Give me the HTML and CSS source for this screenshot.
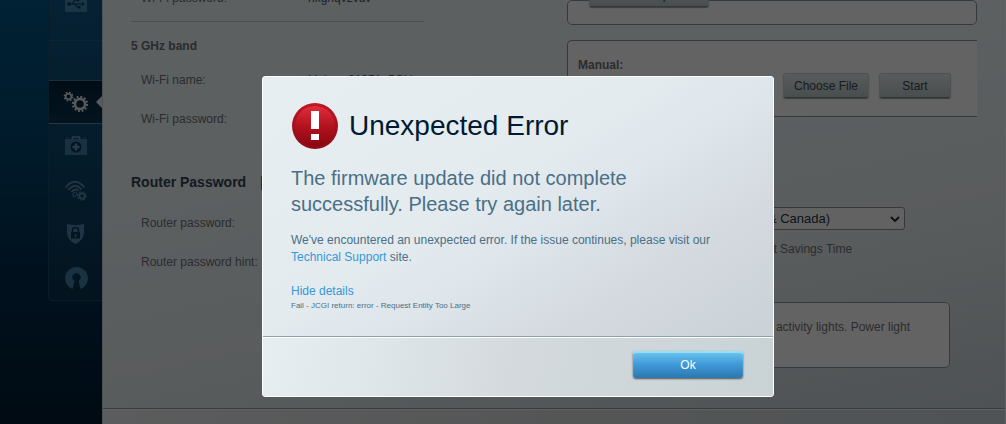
FILE: index.html
```html
<!DOCTYPE html>
<html lang="en">
<head>
    <meta charset="UTF-8">
    <meta name="viewport" content="width=device-width, initial-scale=1.0">
    <title>Router settings</title>
    <link rel="stylesheet" href="styles.css">
</head>
<body>
    <div class="page">
        <nav class="menu">
            <a href="##" class="menu-item usb" aria-label="USB storage">
                <svg width="22" height="18" viewBox="0 0 22 18">
                    <rect width="22" height="18" fill="#4185ad"/>
                    <g fill="none" stroke="#0a3453" stroke-width="1.2">
                        <path d="M3 10H18M7 10L10 6H13M10 10L12 13H14"/>
                        <path d="M17 8L20 10L17 12Z" fill="#0a3453" stroke="none"/>
                    </g>
                    <circle cx="4" cy="10" r="1.8" fill="#0a3453"/>
                    <circle cx="13" cy="6" r="1.4" fill="#0a3453"/>
                    <rect x="13" y="12" width="2.500" height="2.500" fill="#0a3453"/>
                </svg>
            </a>
            <div class="menu-item blank"></div>
            <a href="##" class="menu-item active" aria-label="Connectivity">
                <svg width="26" height="24" viewBox="0 0 26 24" fill="none" stroke="#dde2e5">
                    <circle cx="5.500" cy="6.500" r="2.8" stroke-width="1.6"/>
                    <circle cx="5.500" cy="6.500" r="4" stroke-width="1.8" stroke-dasharray="1.7 1.44"/>
                    <circle cx="17" cy="14" r="5" stroke-width="2.4"/>
                    <circle cx="17" cy="14" r="7" stroke-width="2.2" stroke-dasharray="2 1.665"/>
                </svg>
            </a>
            <a href="##" class="menu-item" aria-label="Troubleshooting">
                <svg width="24" height="22" viewBox="0 0 24 22">
                    <path d="M8.500 4V2H15.500V4" fill="none" stroke="#6597b8" stroke-width="1.5"/>
                    <path d="M2 2.500H5M19 2.500H22" stroke="#2f668b"/>
                    <rect x="1" y="4" width="22" height="16" fill="#3f7ba6"/>
                    <circle cx="12" cy="12" r="5.500" fill="#0a3453"/>
                    <path d="M12 8.500V15.500M8.500 12H15.500" stroke="#5b97bd" stroke-width="2.4"/>
                </svg>
            </a>
            <a href="##" class="menu-item" aria-label="Wireless">
                <svg width="24" height="22" viewBox="0 0 24 22" fill="none" stroke="#5a86a6">
                    <path d="M1.500 8.500Q11 -3 20.500 8.500M4.500 11Q11 3 17.500 10.500M7.500 13Q11 9 14.500 11.500" stroke-width="1.8"/>
                    <circle cx="11" cy="15.500" r="2" stroke-width="1.5" stroke-dasharray="1.3 .6"/>
                    <circle cx="18" cy="17" r="2.600" stroke-width="1.8"/>
                    <circle cx="18" cy="17" r="4" stroke-width="1.5" stroke-dasharray="1.6 1.54"/>
                </svg>
            </a>
            <a href="##" class="menu-item" aria-label="Security">
                <svg width="24" height="22" viewBox="0 0 24 22">
                    <path d="M3 1Q12 3 20 1V9Q20 17 11.500 21Q3 17 3 9Z" fill="#4b81a7"/>
                    <path d="M8.500 10V7.500A3 3 0 0 1 14.500 7.500V10" fill="none" stroke="#0a3453" stroke-width="1.6"/>
                    <rect x="7" y="9" width="9" height="6.500" fill="#0a3453"/>
                    <path d="M11.500 11V14" stroke="#4b81a7" stroke-width="1.5"/>
                </svg>
            </a>
            <a href="##" class="menu-item" aria-label="OpenVPN">
                <svg width="24" height="24" viewBox="0 0 24 24">
                    <path d="M8.500 23L10.500 15A4.200 4.200 0 1 1 14.500 15L16.500 23A11.400 11.400 0 1 0 8.500 23Z" fill="#437ca5"/>
                </svg>
            </a>
        </nav>
        <div class="main">
            <div class="columns">
                <div class="column">
                    <dl class="rows first">
                        <div class="row"><dt>Wi-Fi password:</dt><dd>hxghqvzvdv</dd></div>
                    </dl>
                    <h3 class="band">5 GHz band</h3>
                    <dl class="rows">
                        <div class="row"><dt>Wi-Fi name:</dt><dd>Linksys01051_5GHz</dd></div>
                        <div class="row"><dt>Wi-Fi password:</dt><dd></dd></div>
                    </dl>
                    <h2 class="section-title">Router Password <span class="separator">|</span></h2>
                    <dl class="rows">
                        <div class="row"><dt>Router password:</dt><dd></dd></div>
                        <div class="row"><dt>Router password hint:</dt><dd></dd></div>
                    </dl>
                </div>
                <div class="column">
                    <div class="box update">
                        <button class="button wide">Check for Updates</button>
                    </div>
                    <div class="box manual">
                        <strong class="manual-label">Manual:</strong>
                        <div class="buttons">
                            <button class="button choose">Choose File</button>
                            <button class="button start">Start</button>
                        </div>
                    </div>
                    <div class="timezone">
                        <div class="select-wrap">
                            <select class="select" aria-label="Time zone">
                                <option>(GMT-08:00) Pacific Time (USA &amp; Canada)</option>
                            </select>
                            <svg class="chevron" width="10" height="6" viewBox="0 0 10 6"><path d="M1 1L5 5L9 1" fill="none" stroke="#26323c" stroke-width="2"/></svg>
                        </div>
                        <label class="check"><input type="checkbox" checked>Automatically adjust for Daylight Savings Time</label>
                    </div>
                    <div class="box lights">
                        <label class="lights-text"><input type="checkbox" checked> Enable the router's port activity lights. Power light</label>
                    </div>
                </div>
            </div>
            <div class="page-footer"></div>
        </div>
    </div>

    <div class="overlay">
        <div class="dialog" role="alertdialog" aria-labelledby="dialog-title">
            <div class="dialog-body">
                <div class="dialog-header">
                    <svg width="46" height="46" viewBox="0 0 46 46">
                        <defs>
                            <linearGradient id="red" x1="0" y1="0" x2="0" y2="1">
                                <stop offset="0" stop-color="#e22c3a"/>
                                <stop offset=".5" stop-color="#b3131f"/>
                                <stop offset="1" stop-color="#8b0610"/>
                            </linearGradient>
                            <linearGradient id="rim" x1="0" y1="0" x2="0" y2="1">
                                <stop offset="0" stop-color="#bd1825"/>
                                <stop offset="1" stop-color="#8c0a16"/>
                            </linearGradient>
                        </defs>
                        <circle cx="23" cy="23" r="23" fill="url(#rim)"/>
                        <circle cx="23" cy="23" r="20" fill="url(#red)"/>
                        <path d="M19 8H27V26H19ZM19 31H27V37H19Z" fill="#fff"/>
                    </svg>
                    <h1 class="dialog-title" id="dialog-title">Unexpected Error</h1>
                </div>
                <p class="lead">The firmware update did not complete successfully. Please try again later.</p>
                <p class="text">We've encountered an unexpected error. If the issue continues, please visit our <a href="##">Technical Support</a> site.</p>
                <a href="##" class="details-link">Hide details</a>
                <p class="details">Fail - JCGI return: error - Request Entity Too Large</p>
            </div>
            <div class="dialog-footer">
                <button class="ok">Ok</button>
            </div>
        </div>
    </div>
</body>
</html>
```
FILE: styles.css
```css
*{
    padding: 0;
    margin: 0;
    box-sizing: border-box;
}

body{
    font-family: "Liberation Sans", Arial, sans-serif;
    font-size: 12px;
    line-height: 17px;
    color: #6e6e72;
    background: linear-gradient(#005583, #00466f 30%, #002b4b 65%, #001c30);
    height: 100vh;
    overflow: hidden;
}

a{
    text-decoration: none;
    color: #3797d8;
}

.page{
    display: flex;
    height: 100vh;
    padding-left: 48px;
}

/* ==================menu===================== */
.menu{
    width: 54px;
    flex: none;
    align-self: flex-start;
    background: linear-gradient(#0f5480, #0c4a70 40%, #08324e);
    border: 1px solid #17486a;
    border-width: 0 0 1px 1px;
    border-radius: 0 0 0 4px;
}

.menu-item{
    display: flex;
    align-items: center;
    justify-content: center;
    height: 44px;
    position: relative;
}

.menu-item.usb{
    height: 41px;
    align-items: flex-start;
    overflow: hidden;
    border-bottom: 1px solid #215a7d;
}

.menu-item.usb svg{
    margin-top: -6px;
}

.menu-item.blank{
    height: 39px;
}

.menu-item.active{
    background: linear-gradient(#002138, #093551);
    border-top: 1px solid #4f7489;
    border-bottom: 1px solid #6a8798;
}

.menu-item.active::after{
    content: '';
    position: absolute;
    right: 0;
    top: 15px;
    border: 6px solid transparent;
    border-left-width: 0;
    border-right-color: #e0e6e9;
}

/* ==================content===================== */
.main{
    flex: 1;
    display: flex;
    flex-direction: column;
    background: linear-gradient(168deg, #e6eff3 35%, #dfe6e8 65%, #bfcbd1);
    border-left: 1px solid #c0cdd3;
    border-right: 1px solid #f0f6fa;
}

.columns{
    display: grid;
    grid-template-columns: 1fr 410px;
    padding: 0 28px;
}

.rows{
    display: grid;
    gap: 22px;
    padding-left: 10px;
}

.row{
    display: grid;
    grid-template-columns: 167px 1fr;
}

.row dd{
    color: #55585b;
}

.rows.first{
    margin-top: -10px;
    margin-right: 143px;
    padding-bottom: 14px;
    border-bottom: 1px solid #b9c4ca;
}

.band{
    font-size: 12px;
    margin: 16px 0 17px;
}

.section-title{
    font-size: 14px;
    color: #35424f;
    margin: 46px 0 24px;
}

.separator{
    font-weight: normal;
    margin-left: 10px;
}

.box{
    background: #faf8fa;
    border: 1px solid #7b96a5;
    border-radius: 5px;
}

.update{
    display: flex;
    align-items: flex-start;
    height: 25px;
    padding-left: 21px;
}

.button{
    height: 25px;
    font-family: inherit;
    font-size: 12px;
    color: #3a4650;
    background: linear-gradient(#dce5e5, #b5c2c4);
    border: 1px solid #c3cbcd;
    border-bottom-color: #82898b;
    border-radius: 3px;
    box-shadow: 0 1px 1px #999;
}

.wide{
    width: 120px;
    margin-top: -19px;
}

.manual{
    height: 77px;
    margin-top: 15px;
    padding: 16px 26px 0 10px;
    border-right: 0;
    border-radius: 5px 0 0 5px;
    display: flex;
    justify-content: space-between;
}

.buttons{
    display: flex;
    gap: 10px;
    padding-top: 16px;
}

.choose{
    width: 86px;
}

.start{
    width: 72px;
}

.timezone{
    margin: 90px 0 44px 11px;
}

.select-wrap{
    position: relative;
    width: 327px;
}

.select{
    display: block;
    width: 100%;
    height: 23px;
    padding-left: 4px;
    appearance: none;
    font-family: inherit;
    font-size: 13px;
    color: #26323c;
    background: #f8f5f5;
    border: 1px solid #878d92;
    border-radius: 3px;
}

.chevron{
    position: absolute;
    right: 5px;
    top: 9px;
}

.check{
    display: flex;
    align-items: center;
    gap: 15px;
    margin-top: 11px;
}

.lights{
    width: 383px;
    padding: 15px 39px 31px 10px;
    text-align: right;
    white-space: nowrap;
}

.page-footer{
    height: 16px;
    margin-top: auto;
    background: linear-gradient(100deg, #e3e7e9, #d3d7d8 50%, #c5cfd5);
    border-top: 1px solid #8b999f;
    box-shadow: inset 0 1px #edf3f5;
}

/* ==================dialog===================== */
.overlay{
    position: absolute;
    inset: 0;
    display: flex;
    justify-content: center;
    align-items: flex-start;
    padding: 76px 0 0 30px;
    background: rgba(0, 0, 0, 0.6);
}

.dialog{
    width: 512px;
    border: 1px solid #fff;
    border-radius: 3px;
    background: linear-gradient(to bottom right, #e6eef1, #e3ebef 40%, #dee5eb 52%, #d2d8dd 72%, #c8d0d5);
    color: #4a6f87;
    overflow: hidden;
}

.dialog-body{
    padding: 26px 28px 24px;
    border-bottom: 1px solid #8ea0ae;
}

.dialog-header{
    display: flex;
    align-items: center;
    gap: 11px;
    padding-left: 1px;
}

.dialog-title{
    font-size: 28px;
    line-height: 46px;
    font-weight: normal;
    color: #001a31;
}

.lead{
    max-width: 380px;
    margin: 16px 0 15px;
    font-size: 20px;
    line-height: 26px;
}

.text{
    margin-bottom: 17px;
}

.details-link{
    display: block;
}

.details{
    font-size: 8px;
    line-height: 12px;
}

.dialog-footer{
    display: flex;
    justify-content: flex-end;
    padding: 13px 30px 18px;
    border-top: 1px solid #fff;
    background: linear-gradient(100deg, #e6eef1, #e0e7eb 20%, #d3d9dc 50%, #c9d3d6);
}

.ok{
    width: 110px;
    height: 27px;
    font-family: inherit;
    font-size: 12px;
    color: #fff;
    background: linear-gradient(#6ac8ee, #3f99d8 50%, #2b77b0);
    border: 0;
    border-radius: 3px;
    box-shadow: inset 0 2px 1px #9be0f6, 0 1px 2px #555;
}
```
